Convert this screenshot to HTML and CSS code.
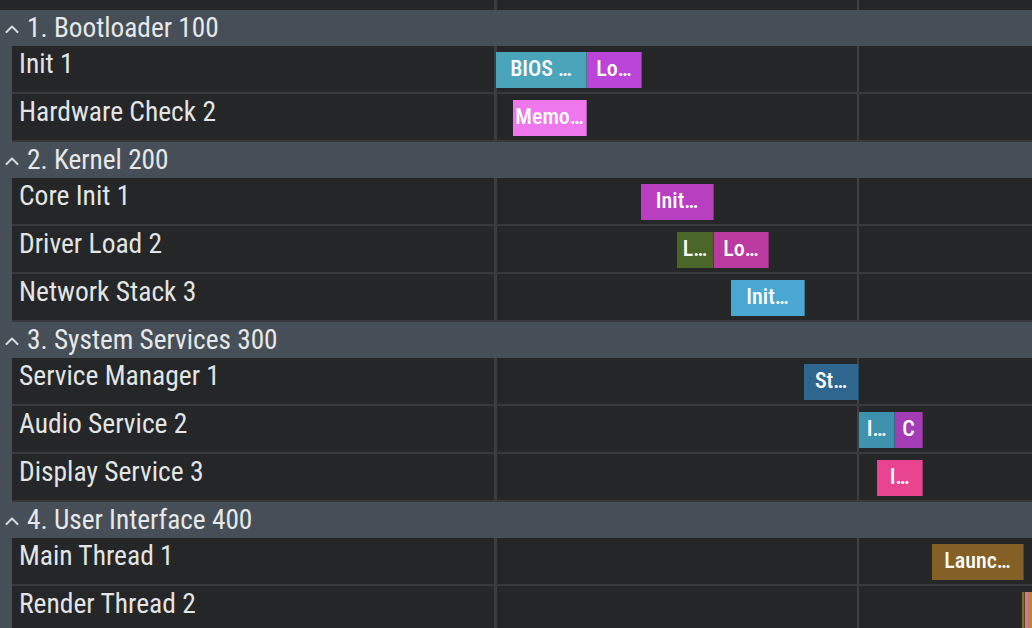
FILE: index.html
```html
<!DOCTYPE html>
<html lang="en">
<head>
<meta charset="utf-8">
<title>Boot timeline</title>
<link rel="stylesheet" href="styles.css">
</head>
<body>
<div class="gantt">
  <div class="row tail">
    <div class="label"></div>
    <div class="track"></div>
  </div>

  <section class="group">
    <div class="group-header"><svg class="chev" viewBox="0 0 14 8" width="14" height="8"><path d="M1.5 7 L7 1.5 L12.5 7"/></svg><span>1. Bootloader 100</span></div>
    <div class="rows">
      <div class="row">
        <div class="label">Init 1</div>
        <div class="track">
          <div class="bar" style="left:-1px;width:91px;background:#4aa5bb">BIOS …</div>
          <div class="bar" style="left:90px;width:55px;background:#bb44d9">Lo…</div>
        </div>
      </div>
      <div class="row">
        <div class="label">Hardware Check 2</div>
        <div class="track">
          <div class="bar" style="left:16px;width:74px;background:#ee77ee">Memo…</div>
        </div>
      </div>
    </div>
  </section>

  <section class="group">
    <div class="group-header"><svg class="chev" viewBox="0 0 14 8" width="14" height="8"><path d="M1.5 7 L7 1.5 L12.5 7"/></svg><span>2. Kernel 200</span></div>
    <div class="rows">
      <div class="row">
        <div class="label">Core Init 1</div>
        <div class="track">
          <div class="bar" style="left:144px;width:73px;background:#b83fbf">Init…</div>
        </div>
      </div>
      <div class="row">
        <div class="label">Driver Load 2</div>
        <div class="track">
          <div class="bar" style="left:180px;width:37px;background:#4a6628">L…</div>
          <div class="bar" style="left:217px;width:55px;background:#bb3a9f">Lo…</div>
        </div>
      </div>
      <div class="row">
        <div class="label">Network Stack 3</div>
        <div class="track">
          <div class="bar" style="left:234px;width:74px;background:#4aa6d3">Init…</div>
        </div>
      </div>
    </div>
  </section>

  <section class="group">
    <div class="group-header"><svg class="chev" viewBox="0 0 14 8" width="14" height="8"><path d="M1.5 7 L7 1.5 L12.5 7"/></svg><span>3. System Services 300</span></div>
    <div class="rows">
      <div class="row">
        <div class="label">Service Manager 1</div>
        <div class="track">
          <div class="bar" style="left:307px;width:55px;background:#2e6690">St…</div>
        </div>
      </div>
      <div class="row">
        <div class="label">Audio Service 2</div>
        <div class="track">
          <div class="bar" style="left:362px;width:36px;background:#3f92ae">I…</div>
          <div class="bar" style="left:398px;width:28px;background:#a43cb6">C</div>
        </div>
      </div>
      <div class="row">
        <div class="label">Display Service 3</div>
        <div class="track">
          <div class="bar" style="left:380px;width:46px;background:#e8448f">I…</div>
        </div>
      </div>
    </div>
  </section>

  <section class="group">
    <div class="group-header"><svg class="chev" viewBox="0 0 14 8" width="14" height="8"><path d="M1.5 7 L7 1.5 L12.5 7"/></svg><span>4. User Interface 400</span></div>
    <div class="rows">
      <div class="row">
        <div class="label">Main Thread 1</div>
        <div class="track">
          <div class="bar" style="left:435px;width:92px;background:#836026">Launc…</div>
        </div>
      </div>
      <div class="row">
        <div class="label">Render Thread 2</div>
        <div class="track">
          <div class="bar thin" style="left:525px;width:2px;background:#7a6f2e"></div>
          <div class="bar thin" style="left:527px;width:1px;background:#4a4a22"></div>
          <div class="bar thin" style="left:528px;width:3px;background:#e86ba0"></div>
          <div class="bar thin" style="left:531px;width:4px;background:#b5864a"></div>
        </div>
      </div>
    </div>
  </section>
</div>
</body>
</html>
```

FILE: styles.css
```css
html, body {
  margin: 0;
  padding: 0;
  background: #242628;
  overflow: hidden;
}

.gantt {
  width: 1032px;
  font-family: "Roboto Condensed", "Roboto", "Liberation Sans", sans-serif;
  color: #e2e4e6;
}

.group {
  background: #464f57;
}

.group-header {
  height: 36px;
  display: flex;
  align-items: center;
  gap: 8px;
  padding-left: 5px;
  font-size: 27.3px;
  font-weight: 400;
  line-height: 36px;
  color: #e6e8ea;
}

.chev {
  flex: none;
  fill: none;
  stroke: #d6dadd;
  stroke-width: 2;
  stroke-linecap: round;
  stroke-linejoin: round;
  margin-top: 2px;
}

.rows {
  margin-left: 12px;
}

.row {
  display: grid;
  grid-template-columns: 482px 1fr;
  height: 46px;
  border-bottom: 2px solid #37393c;
  background: #242628;
}

.row.tail {
  height: 10px;
  border-bottom: 0;
}

.label {
  padding: 2px 0 0 7px;
  font-size: 27.5px;
  font-weight: 400;
  line-height: 32px;
  white-space: nowrap;
  overflow: hidden;
}

.track {
  position: relative;
  border-left: 3px solid #3b3d40;
  background: linear-gradient(to right, transparent 360px, #3d3f42 360px, #3d3f42 362px, transparent 362px);
}

.tail .track {
  margin-left: 12px;
}

.bar {
  position: absolute;
  top: 6px;
  height: 36px;
  box-sizing: border-box;
  border-right: 1px solid rgba(0, 0, 0, 0.25);
  color: #ffffff;
  font-size: 22px;
  font-weight: 500;
  line-height: 33px;
  text-align: center;
  white-space: nowrap;
  overflow: hidden;
  padding: 0 2px;
}

.bar.thin {
  border-right: 0;
  padding: 0;
}
```
